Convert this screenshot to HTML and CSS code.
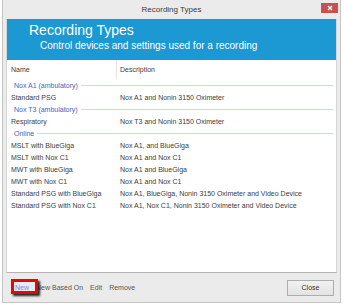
FILE: index.html
```html
<!DOCTYPE html>
<html lang="en">

<head>
  <meta charset="UTF-8" />
  <meta name="viewport" content="width=device-width, initial-scale=1.0" />
  <title>Recording Types</title>
  <link rel="stylesheet" href="styles.css">
</head>

<body>
  <div class="window">
    <!-- Title bar with the close button -->
    <div class="titlebar">
      <span class="title">Recording Types</span>
      <span class="close-btn">
        <svg width="6" height="6" viewBox="0 0 6 6"><path d="M1 1L5 5M5 1L1 5" stroke="#fff" stroke-width="1.4"/></svg>
      </span>
    </div>

    <div class="content">
      <div class="banner">
        <div class="banner-title">Recording Types</div>
        <div class="banner-sub">Control devices and settings used for a recording</div>
      </div>

      <div class="list">
        <div class="list-head">
          <div class="col-name">Name</div>
          <div class="col-desc">Description</div>
        </div>

        <div class="group"><span>Nox A1 (ambulatory)</span></div>
        <div class="row"><div class="col-name">Standard PSG</div><div class="col-desc">Nox A1 and Nonin 3150 Oximeter</div></div>

        <div class="group"><span>Nox T3 (ambulatory)</span></div>
        <div class="row"><div class="col-name">Respiratory</div><div class="col-desc">Nox T3 and Nonin 3150 Oximeter</div></div>

        <div class="group"><span>Online</span></div>
        <div class="row"><div class="col-name">MSLT with BlueGiga</div><div class="col-desc">Nox A1, and BlueGiga</div></div>
        <div class="row"><div class="col-name">MSLT with Nox C1</div><div class="col-desc">Nox A1 and Nox C1</div></div>
        <div class="row"><div class="col-name">MWT with BlueGiga</div><div class="col-desc">Nox A1 and BlueGiga</div></div>
        <div class="row"><div class="col-name">MWT with Nox C1</div><div class="col-desc">Nox A1 and Nox C1</div></div>
        <div class="row"><div class="col-name">Standard PSG with BlueGiga</div><div class="col-desc">Nox A1, BlueGiga, Nonin 3150 Oximeter and Video Device</div></div>
        <div class="row"><div class="col-name">Standard PSG with Nox C1</div><div class="col-desc">Nox A1, Nox C1, Nonin 3150 Oximeter and Video Device</div></div>
      </div>
    </div>

    <!-- Bottom command bar -->
    <div class="footer">
      <div class="links">
        <span class="link link-new">New</span>
        <span class="link">New Based On</span>
        <span class="link">Edit</span>
        <span class="link">Remove</span>
      </div>
      <!-- red highlight drawn over the New link -->
      <span class="callout"></span>
      <button class="btn">Close</button>
    </div>
  </div>
</body>

</html>
```

FILE: styles.css
```css
body {
  margin: 0;
  background: #fff;
  font-family: "Liberation Sans", Arial, sans-serif;
}

.window {
  margin-left: 2px;
  width: 337px;
  height: 302px;
  border: 1px solid #c4c4c4;
  border-top: none;
  background: #ebebeb;
}

.titlebar {
  position: relative;
  height: 19px;
  display: flex;
  align-items: center;
  justify-content: center;
}

.title {
  font-size: 8px;
  color: #3a3a3a;
}

.close-btn {
  position: absolute;
  right: 2px;
  top: 3px;
  width: 17px;
  height: 10px;
  background: #c9504f;
  display: flex;
  align-items: center;
  justify-content: center;
}

.content {
  margin: 0 3px;
  background: #fff;
  border-left: 1px solid #d6d6d6;
  border-right: 1px solid #d6d6d6;
  border-bottom: 1px solid #b4b4b4;
  height: 253px;
}

.banner {
  background: #1c98d2;
  height: 41px;
  color: #fff;
  padding-left: 22px;
  box-sizing: border-box;
  padding-top: 3px;
}

.banner-title {
  font-size: 14px;
  line-height: 17px;
}

.banner-sub {
  font-size: 10px;
  line-height: 13px;
  padding-left: 11px;
}

.list {
  font-size: 7px;
  color: #3c3c3c;
}

.list-head {
  display: flex;
  height: 19px;
  align-items: center;
}

.list-head .col-desc {
  border-left: 1px solid #e4e4e4;
  height: 19px;
  line-height: 19px;
  padding-left: 3px;
}

.col-name {
  width: 109px;
  box-sizing: border-box;
  padding-left: 4px;
}

.col-desc {
  padding-left: 3px;
}

.row .col-desc {
  padding-left: 4px;
}

.group {
  height: 12px;
  display: flex;
  align-items: center;
  padding-left: 7px;
  margin-right: 3px;
  color: #3f63c4;
}

.group::after {
  content: "";
  flex: 1;
  height: 1px;
  background: #cdd6ea;
  margin-left: 3px;
}

.row {
  display: flex;
  height: 12px;
  align-items: center;
}

.footer {
  position: relative;
  height: 29px;
  display: flex;
  align-items: center;
  justify-content: space-between;
  padding: 0 6px 0 12px;
}

.links {
  display: flex;
  gap: 7px;
  font-size: 7px;
  color: #555;
}

.link-new {
  color: #7a8fdc;
  background: #e4eafb;
}

.callout {
  position: absolute;
  left: 8px;
  top: 6px;
  width: 21px;
  height: 9px;
  border: 3px solid #e10a0a;
  box-shadow: 2px 2px 2px rgba(0, 0, 0, 0.85);
}

.btn {
  width: 47px;
  height: 16px;
  border: 1px solid #adadad;
  background: linear-gradient(#f2f2f2, #e3e3e3);
  font-family: "Liberation Sans", Arial, sans-serif;
  font-size: 7px;
  color: #333;
  padding: 0;
}
```
